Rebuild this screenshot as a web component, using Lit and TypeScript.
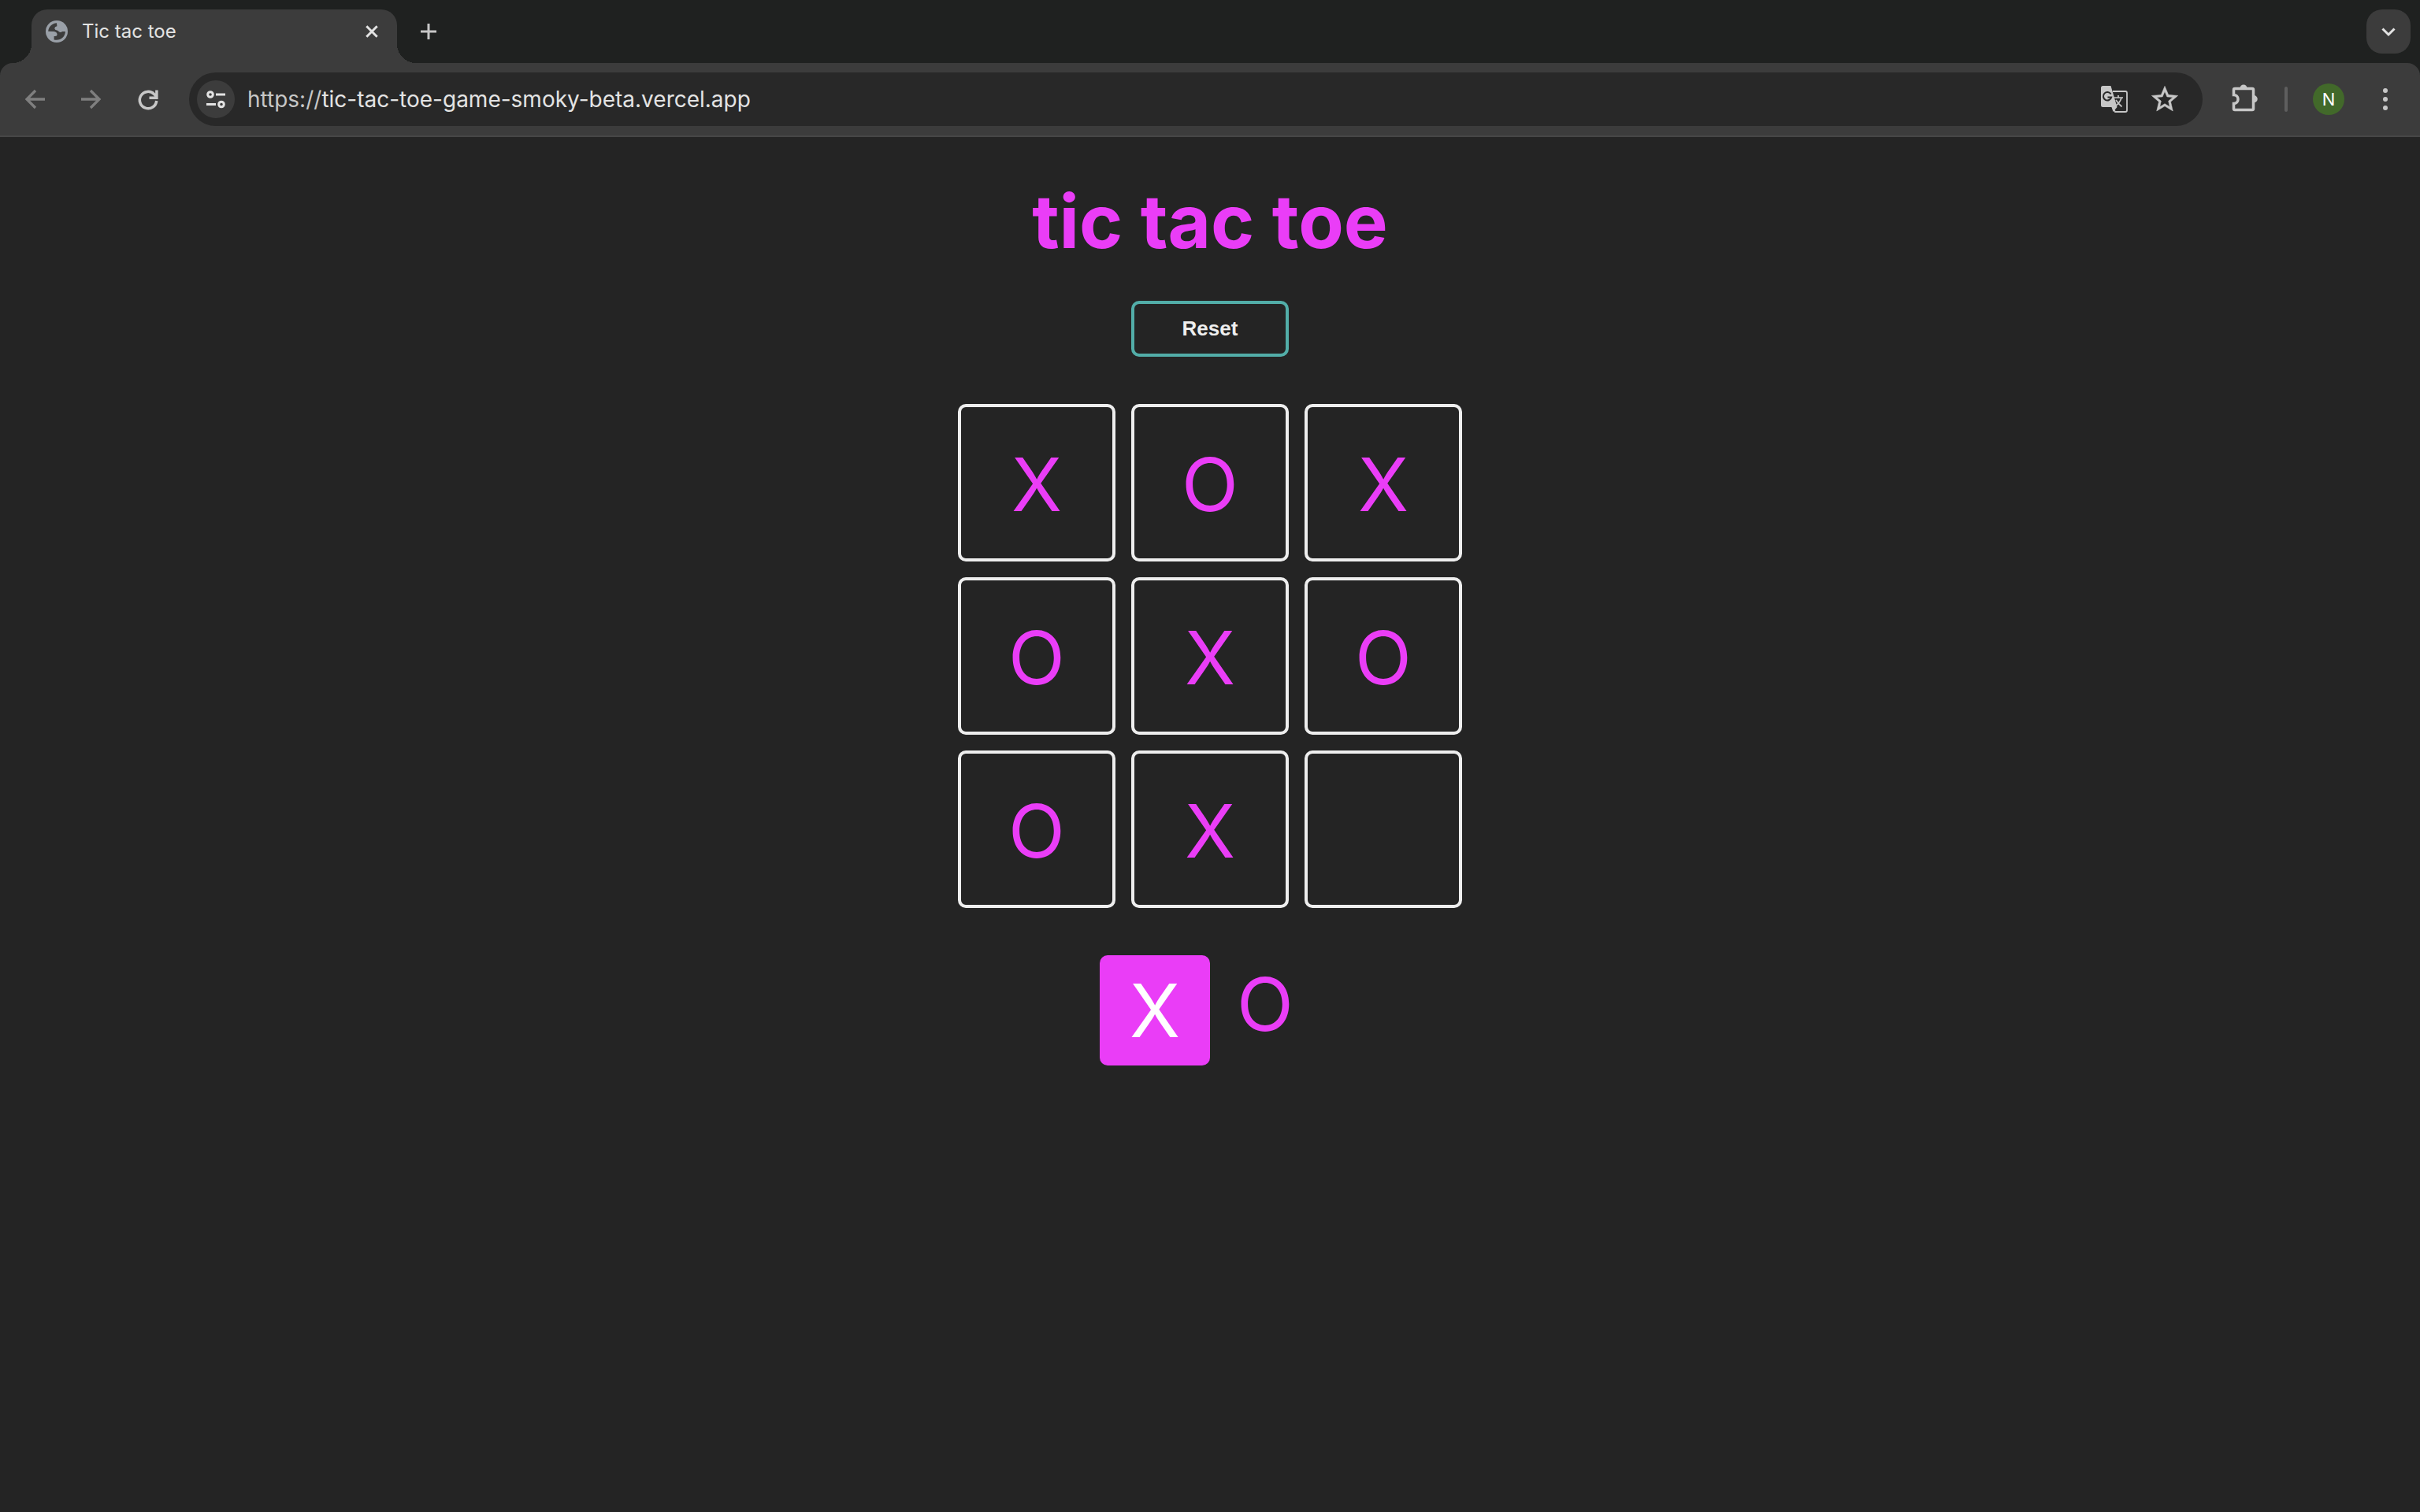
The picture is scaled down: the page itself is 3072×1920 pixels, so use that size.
import { LitElement, html, css, svg, nothing } from "lit";
import { customElement, property, state } from "lit/decorators.js";

type Mark = "X" | "O" | null;

const START: Mark[] = ["X", "O", "X", "O", "X", "O", "O", "X", null];

const icons = {
  globe: svg`<circle cx="14" cy="14" r="14" fill="#9aa0a8"/><path d="M14 3.2C8.2 3.4 3.6 7.900 3.200 13.800L10.500 14Q14.500 14.500 14.600 18Q14.500 19.800 12 20L10.600 20L10.600 24.400C18 26.200 24.800 21.200 24.900 14L21 14Q19 15.800 16.800 14.200Q15.800 12.600 14.200 12.400Q11.500 12.300 11.300 10.200Q11.400 7.800 14.400 7.200Z" fill="#3c3c3c"/>`,
  close: svg`<path d="M1.300 1.300L14.700 14.700M14.700 1.300L1.300 14.700" stroke="#e3e3e3" stroke-width="3" fill="none"/>`,
  plus: svg`<path d="M10 0V20M0 10H20" stroke="#c7c7c7" stroke-width="3" fill="none"/>`,
  chevron: svg`<path d="M1.500 1.500L9 9L16.500 1.500" stroke="#e3e3e3" stroke-width="3" fill="none"/>`,
  back: svg`<path d="M13 1L2 12L13 23M2 12H25" stroke="#7f7f7f" stroke-width="3.300" fill="none"/>`,
  forward: svg`<path d="M11 1L22 12L11 23M22 12H-1" stroke="#7f7f7f" stroke-width="3.300" fill="none"/>`,
  reload: svg`<path d="M22.700 14A10.700 10.700 0 1 1 19.700 5.600L22.500 8.500M13.500 10.200H22.900V0.500" stroke="#c7c7c7" stroke-width="3.500" fill="none"/>`,
  tune: svg`<g fill="none" stroke="#e3e3e3" stroke-width="3"><circle cx="5" cy="5" r="3.300"/><circle cx="19" cy="17.500" r="3.300"/><path d="M12 5H24M0 17.500H12"/></g>`,
  translate: svg`<path d="M15 7H31Q33 7 33 9V31Q33 33 31 33H18L14.500 27" fill="none" stroke="#c7c7c7" stroke-width="1.800"/><path d="M2.500 0H12.500L20.500 27L15.500 33L13.500 27H2.500Q0 27 0 24.500V2.500Q0 0 2.500 0Z" fill="#c7c7c7"/><path d="M12.600 10.500A5.200 5.200 0 1 0 13.200 14.500H8.500" fill="none" stroke="#282828" stroke-width="2"/><path d="M16.500 15H28M22 12V15M26 15Q24.500 21 18.500 25.500M19 18Q21.500 22 26.500 26.500" fill="none" stroke="#c7c7c7" stroke-width="1.700"/>`,
  star: svg`<path d="M22 9.240L14.810 8.620L12 2L9.190 8.630L2 9.240L7.460 13.970L5.820 21L12 17.270L18.180 21L16.550 13.970ZM12 15.400L8.240 17.670L9.240 13.390L5.920 10.510L10.300 10.130L12 6.100L13.710 10.140L18.090 10.520L14.770 13.400L15.770 17.680Z" fill="#c7c7c7" stroke="#c7c7c7" stroke-width="0.300"/>`,
  puzzle: svg`<path d="M4 5.500H26Q27.500 5.500 27.500 7V31Q27.500 32.500 26 32.500H4Q2.500 32.500 2.500 31V24.500A5.300 5.300 0 0 0 2.500 13.500V7Q2.500 5.500 4 5.500Z" fill="none" stroke="#c7c7c7" stroke-width="3.500"/><path d="M10.500 5A4.500 4.500 0 0 1 19.500 5ZM28 14A4.500 4.500 0 0 1 28 23.500Z" fill="#c7c7c7"/>`,
  dots: svg`<g fill="#c7c7c7"><circle cx="3" cy="3" r="3"/><circle cx="3" cy="14" r="3"/><circle cx="3" cy="25" r="3"/></g>`,
};

const icon = (name: keyof typeof icons, width: number, height: number, box = `0 0 ${width} ${height}`) =>
  html`<svg width=${width} height=${height} viewBox=${box} aria-hidden="true">${icons[name]}</svg>`;

@customElement("browser-bar")
export class BrowserBar extends LitElement {
  static styles = css`
    :host {
      display: block;
      background: #1f2120;
      color: #e3e3e3;
      font-family: Inter, "Liberation Sans", sans-serif;
    }
    button {
      display: flex;
      align-items: center;
      justify-content: center;
      padding: 0;
      border: 0;
      background: none;
      color: inherit;
      font: inherit;
    }
    svg {
      display: block;
      flex: none;
      overflow: visible;
    }
    .tabs {
      display: flex;
      align-items: flex-end;
      height: 80px;
      padding: 0 12px 0 40px;
      box-sizing: border-box;
    }
    .tab {
      position: relative;
      display: flex;
      align-items: center;
      width: 464px;
      height: 68px;
      padding: 0 24px 12px 18px;
      box-sizing: border-box;
      border-radius: 20px 20px 0 0;
      background: #3c3c3c;
    }
    .tab::before,
    .tab::after {
      content: "";
      position: absolute;
      bottom: 0;
      width: 24px;
      height: 24px;
    }
    .tab::before {
      right: 100%;
      background: radial-gradient(circle at 0 0, transparent 24px, #3c3c3c 24px);
    }
    .tab::after {
      left: 100%;
      background: radial-gradient(circle at 100% 0, transparent 24px, #3c3c3c 24px);
    }
    .name {
      flex: 1;
      margin-left: 18px;
      font-size: 24px;
      line-height: 28px;
      text-align: left;
    }
    .add {
      width: 80px;
      height: 80px;
    }
    .search {
      width: 56px;
      height: 56px;
      margin: 0 0 12px auto;
      border-radius: 20px;
      background: #3c3c3c;
    }
    .tools {
      display: flex;
      align-items: center;
      height: 94px;
      padding: 0 41px 0 8px;
      box-sizing: border-box;
      border-bottom: 2px solid #474747;
      border-radius: 16px 16px 0 0;
      background: #3c3c3c;
    }
    .nav {
      width: 72px;
      height: 68px;
    }
    .reload {
      margin: 0 16px 0 0;
    }
    .address {
      display: flex;
      flex: 1;
      align-items: center;
      height: 68px;
      padding: 0 32px 0 10px;
      box-sizing: border-box;
      border-radius: 34px;
      background: #282828;
      font-size: 28px;
      line-height: 36px;
    }
    .site {
      width: 48px;
      height: 48px;
      margin-right: 16px;
      border-radius: 50%;
      background: #3c3c3c;
    }
    .scheme {
      color: #c7c7c7;
    }
    .url {
      flex: 1;
      min-width: 0;
      padding: 0;
      border: 0;
      outline: 0;
      background: none;
      color: inherit;
      font: inherit;
    }
    .mark {
      width: 34px;
      margin-right: 27px;
    }
    .fav {
      width: 40px;
      margin-right: -4px;
    }
    .ext {
      margin-left: 37px;
    }
    .rule {
      width: 4px;
      height: 32px;
      margin: 0 32px 0 33px;
      border-radius: 2px;
      background: #5e5e5e;
    }
    .avatar {
      width: 40px;
      height: 40px;
      margin-right: 49px;
      border-radius: 50%;
      background: #42692a;
      color: #ffffff;
      font-size: 22px;
    }
  `;

  render() {
    return html`
      <div class="tabs">
        <div class="tab">
          ${icon("globe", 28, 28)}
          <span class="name">Tic tac toe</span>
          <button class="close" aria-label="Close tab">${icon("close", 16, 16)}</button>
        </div>
        <button class="add" aria-label="New tab">${icon("plus", 20, 20)}</button>
        <button class="search" aria-label="Search tabs">${icon("chevron", 18, 11)}</button>
      </div>
      <div class="tools">
        <button class="nav" aria-label="Back">${icon("back", 25, 24)}</button>
        <button class="nav" aria-label="Forward">${icon("forward", 25, 24)}</button>
        <button class="nav reload" aria-label="Reload">${icon("reload", 25, 25)}</button>
        <div class="address">
          <button class="site" aria-label="Site information">${icon("tune", 24, 22)}</button>
          <label class="scheme" for="url">https://</label>
          <input class="url" id="url" type="text" spellcheck="false" value="tic-tac-toe-game-smoky-beta.vercel.app" />
          <button class="mark" aria-label="Translate">${icon("translate", 34, 34)}</button>
          <button class="fav" aria-label="Bookmark">${icon("star", 40, 40, "0 0 24 24")}</button>
        </div>
        <button class="ext" aria-label="Extensions">${icon("puzzle", 34, 38)}</button>
        <span class="rule"></span>
        <button class="avatar" aria-label="Profile N">N</button>
        <button class="menu" aria-label="Menu">${icon("dots", 6, 28)}</button>
      </div>
    `;
  }
}

@customElement("game-square")
export class GameSquare extends LitElement {
  static styles = css`
    :host {
      display: block;
    }
    .square {
      display: grid;
      place-items: center;
      width: 200px;
      height: 200px;
      padding: 4px 0 0;
      box-sizing: border-box;
      border: 4px solid #eeeeee;
      border-radius: 10px;
      background: none;
      color: #ea3df7;
      font: 94px/120px Inter, "Liberation Sans", sans-serif;
    }
  `;

  @property() mark: Mark = null;
  @property({ type: Number }) place = 0;

  render() {
    return html`<button class="square" aria-label="Square ${this.place} ${this.mark ?? "empty"}">
      ${this.mark ?? nothing}
    </button>`;
  }
}

@customElement("app-root")
export class AppRoot extends LitElement {
  static styles = css`
    :host {
      display: flex;
      flex-direction: column;
      min-height: 100vh;
      background: #242424;
      color: #ea3df7;
      font-family: Inter, "Liberation Sans", sans-serif;
    }
    .game {
      display: flex;
      flex-direction: column;
      align-items: center;
      padding: 48px 16px;
    }
    .title {
      margin: 0;
      font-size: 94px;
      line-height: 118px;
      font-weight: 700;
    }
    .reset {
      width: 200px;
      height: 71px;
      margin: 42px 0 60px;
      padding: 0 0 2px;
      border: 4px solid #52ada8;
      border-radius: 10px;
      background: none;
      color: #eeeeee;
      font: 700 26px/32px "Liberation Sans", sans-serif;
    }
    .board {
      display: grid;
      grid-template-columns: repeat(3, auto);
      gap: 20px;
    }
    .turn {
      display: flex;
      margin-top: 60px;
    }
    .player {
      width: 140px;
      height: 140px;
      border-radius: 10px;
      font-size: 94px;
      line-height: 124px;
      text-align: center;
    }
    .player.active {
      background: #ea3df7;
      color: #ffffff;
      line-height: 140px;
    }
  `;

  @state() private board: Mark[] = [...START];
  @state() private next: Mark = "X";

  private play(i: number) {
    if (this.board[i]) return;
    this.board = this.board.map((m, n) => (n === i ? this.next : m));
    this.next = this.next === "X" ? "O" : "X";
  }

  private reset() {
    this.board = Array(9).fill(null);
    this.next = "X";
  }

  render() {
    return html`
      <browser-bar></browser-bar>
      <main class="game">
        <h1 class="title">tic tac toe</h1>
        <button class="reset" @click=${this.reset}>Reset</button>
        <section class="board">
          ${this.board.map(
            (mark, i) => html`<game-square .mark=${mark} .place=${i + 1} @click=${() => this.play(i)}></game-square>`
          )}
        </section>
        <section class="turn">
          ${(["X", "O"] as const).map(
            (p) => html`<div class="player ${p === this.next ? "active" : ""}">${p}</div>`
          )}
        </section>
      </main>
    `;
  }
}
